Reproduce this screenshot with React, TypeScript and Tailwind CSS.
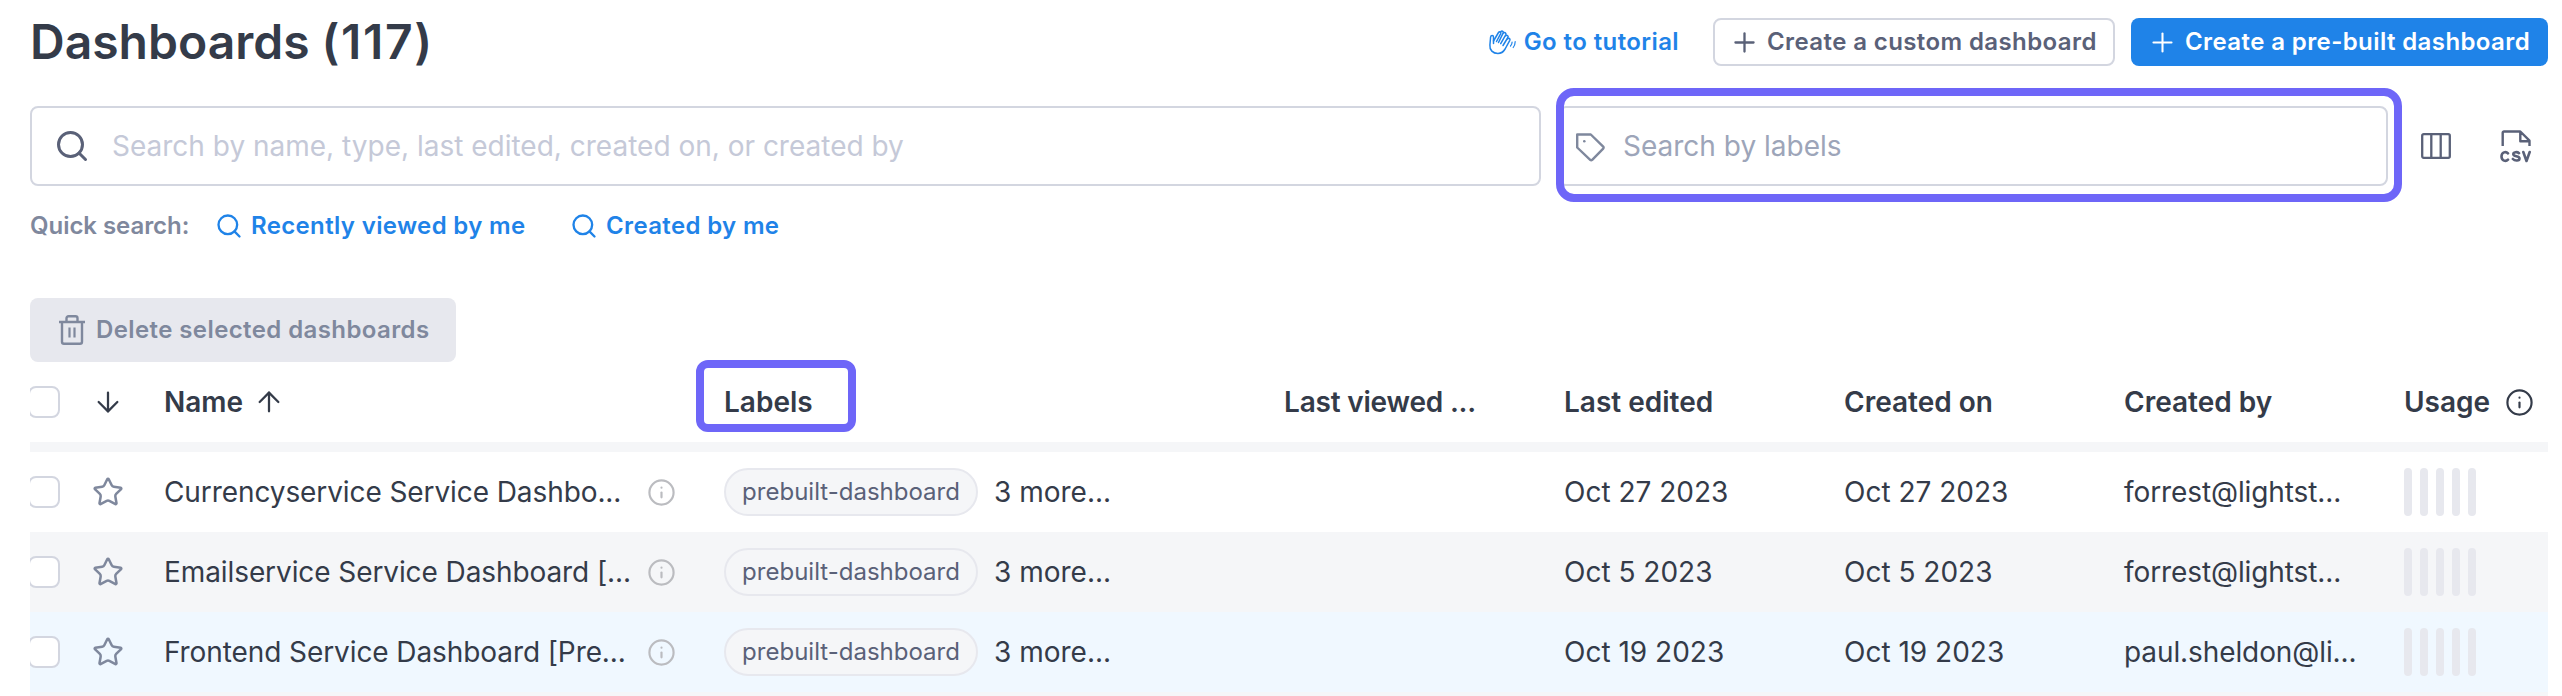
import { ArrowDown, ArrowUp, Info, Plus, Search, Star } from 'lucide-react'

type Row = {
  name: string
  edited: string
  created: string
  author: string
  className: string
}

const rows: Row[] = [
  {
    name: 'Currencyservice Service Dashbo...',
    edited: 'Oct 27 2023',
    created: 'Oct 27 2023',
    author: 'forrest@lightst...',
    className: 'bg-white',
  },
  {
    name: 'Emailservice Service Dashboard [...',
    edited: 'Oct 5 2023',
    created: 'Oct 5 2023',
    author: 'forrest@lightst...',
    className: 'bg-[#f5f6f8]',
  },
  {
    name: 'Frontend Service Dashboard [Pre...',
    edited: 'Oct 19 2023',
    created: 'Oct 19 2023',
    author: 'paul.sheldon@li...',
    className: 'bg-[#f0f8ff]',
  },
]

const columns = 'grid grid-cols-[134px_560px_560px_280px_280px_280px_280px_144px] items-center'

const WaveIcon = () => (
  <svg className="h-7 w-7" viewBox="0 0 28 28" fill="none" stroke="currentColor" strokeWidth="1.5" strokeLinecap="round" strokeLinejoin="round">
    <path d="M5.500 15.500V9c0-1.900-2.600-1.900-2.900 0L1.900 17c-.5 5 3 8.500 8 8.500 3.500 0 5.500-1.600 7.200-4.500l4.700-8.700c.8-1.600-1.200-2.800-2.300-1.300" />
    <path d="M5.500 13L10.500 4.500c1-1.600 3-.4 2.200 1.200L8.500 13.500M12.400 4.300c1.100-2.200 3.600-1.100 2.700.9L10.500 14.500M15 5.500c1.300-1.900 3.600-.6 2.700 1.300L12.700 15.700M17.500 8c1.400-1.500 3.300-.2 2.400 1.500L15 17.500" />
    <path d="M22.500 18c1-1 1.600-2.400 1.600-4M25.200 19.500c1.300-1.700 2-3.700 2-6" strokeWidth="1.200" />
  </svg>
)

const TagIcon = () => (
  <svg className="h-8 w-8 shrink-0 text-[#7f889d]" viewBox="0 0 32 32" fill="none" stroke="currentColor" strokeWidth="2.400" strokeLinejoin="round">
    <path d="M3.200 4.500h13.600L29.200 16.600a1.400 1.400 0 0 1 0 2L18.200 29.900a1.500 1.500 0 0 1-2 0L3.200 17.500z" />
    <circle cx="10.300" cy="11.300" r="1.300" fill="currentColor" stroke="none" />
  </svg>
)

const ColumnsIcon = () => (
  <svg className="h-[26px] w-[30px]" viewBox="0 0 30 26" fill="none" stroke="currentColor" strokeWidth="2.300">
    <rect x="1.200" y="1.200" width="27.600" height="23.600" rx="1.500" />
    <path d="M10.300 1v24M19.700 1v24" />
  </svg>
)

const CsvIcon = () => (
  <svg className="h-[33px] w-8" viewBox="0 0 32 33" fill="none" stroke="currentColor" strokeWidth="2.400" strokeLinejoin="round">
    <path d="M2.700 16V2.800a1.300 1.300 0 0 1 1.300-1.300H20.300l9.200 9.200V16M20.300 1.500v9.700h9.200" />
    <path
      d="M8 23.300c-2-2.200-6.500-1.300-6.500 3.200s4.500 5.400 6.500 3.200M19 23.200c-1.800-1.700-5.700-1.200-5.700 1 0 2.800 6.200 1.300 6.200 4.200 0 2.600-4.600 2.800-6.600.6M23.300 22l3.200 9 3.200-9"
      strokeWidth="2.600"
      strokeLinecap="round"
    />
  </svg>
)

const TrashIcon = () => (
  <svg className="h-[30px] w-[26px]" viewBox="0 0 26 30" fill="none" stroke="currentColor" strokeWidth="2.400" strokeLinejoin="round">
    <path d="M0 7h26M7.500 7V3.200a2 2 0 0 1 2-2h7a2 2 0 0 1 2 2V7M3 7v19.800a2 2 0 0 0 2 2h16a2 2 0 0 0 2-2V7" />
    <path d="M10.500 12.500v10M15.500 12.500v10" strokeWidth="2.200" />
  </svg>
)

// The box is pulled 2px left so the table edge clips its border.
const Checkbox = () => <span className="-ml-0.5 block size-8 shrink-0 rounded-lg border-2 border-[#d3d6e0] bg-white" />

const Header = () => (
  <header className="flex h-12 items-center justify-between">
    <h1 className="text-[48px] leading-12 font-semibold">
      Dashboards <span className="tracking-[1.6px]">(117)</span>
    </h1>
    <div className="flex items-center text-[24px] font-semibold tracking-[0.4px]">
      <a className="mr-[34px] flex items-center gap-2 text-[#1f83e8]">
        <WaveIcon />
        Go to tutorial
      </a>
      <button className="mr-4 flex h-12 w-[402px] items-center gap-[7px] rounded-lg border-2 border-[#d3d6e0] pl-[14px] text-[#5a6178]">
        <Plus size={31} strokeWidth={1.8} />
        Create a custom dashboard
      </button>
      <button className="flex h-12 w-[417px] items-center gap-[7px] rounded-lg bg-[#1f83e8] pl-4 text-white">
        <Plus size={31} strokeWidth={1.6} />
        Create a pre-built dashboard
      </button>
    </div>
  </header>
)

const SearchBar = () => (
  <div className="mt-10 flex h-20 items-center text-[28px]">
    <div className="flex h-20 w-[1511px] items-center gap-[22px] rounded-lg border-2 border-[#d3d6e0] pl-[22px] text-[#c5c9d8]">
      <Search size={36} strokeWidth={2} className="text-[#5a6178]" />
      Search by name, type, last edited, created on, or created by
    </div>
    <div className="relative ml-[17px] flex h-20 w-[830px] items-center gap-[17px] rounded-lg border-2 border-[#d3d6e0] pl-[14px] text-[#9da5b9]">
      <TagIcon />
      Search by labels
      <div className="absolute -top-5 -left-1 h-[114px] w-[846px] rounded-[18px] border-8 border-[#6e66f8]" />
    </div>
    <div className="ml-[33px] flex items-center gap-[49px] text-[#5a6178]">
      <ColumnsIcon />
      <CsvIcon />
    </div>
  </div>
)

const QuickSearch = () => (
  <div className="mt-6 flex h-8 items-center text-[24px] font-semibold text-[#7f889d]">
    <span className="w-[185px] tracking-[-0.05px]">Quick search:</span>
    <a className="flex w-[355px] items-center gap-2 tracking-[0.35px] text-[#1f83e8]">
      <Search size={28} strokeWidth={2} />
      Recently viewed by me
    </a>
    <a className="flex items-center gap-2 tracking-[0.35px] text-[#1f83e8]">
      <Search size={28} strokeWidth={2} />
      Created by me
    </a>
  </div>
)

const UsageBars = () => (
  <div className="flex gap-2">
    {[0, 1, 2, 3, 4].map((bar) => (
      <span key={bar} className="h-12 w-2 rounded-full bg-[#e7e8ee]" />
    ))}
  </div>
)

// The 8px of top padding keeps the Labels outline from being clipped.
const Table = () => (
  <div className="-mt-2 overflow-hidden pt-2 text-[28px]">
    <div className={`${columns} h-20 font-semibold`}>
      <div className="flex items-center gap-8">
        <Checkbox />
        <ArrowDown size={32} strokeWidth={1.7} />
      </div>
      <div className="flex items-center gap-[10px]">
        Name
        <ArrowUp size={32} strokeWidth={1.7} />
      </div>
      <div className="relative">
        Labels
        <div className="absolute -top-[21px] -left-7 h-[72px] w-40 rounded-xl border-8 border-[#6e66f8]" />
      </div>
      <div className="tracking-[-0.2px]">Last viewed ...</div>
      <div>Last edited</div>
      <div>Created on</div>
      <div>Created by</div>
      <div className="flex items-center gap-[15px]">
        Usage
        <Info size={29} strokeWidth={1.8} />
      </div>
    </div>
    <div className="h-[10px] bg-[#f5f6f8]" />
    {rows.map((row) => (
      <div key={row.name} className={`${columns} h-20 ${row.className}`}>
        <div className="flex items-center gap-8">
          <Checkbox />
          <Star size={32} strokeWidth={1.9} className="text-[#7f889d]" />
        </div>
        <div className="flex items-center justify-between pr-12 tracking-[-0.09px]">
          {row.name}
          <Info size={29} strokeWidth={1.8} className="text-[#bbbcc0]" />
        </div>
        <div className="flex items-center gap-4">
          <span className="flex h-12 w-[254px] items-center justify-center rounded-full border-2 border-[#e7e8ee] bg-[#f5f6f8] text-[24px] text-[#5a6178]">
            prebuilt-dashboard
          </span>
          3 more...
        </div>
        <div />
        <div>{row.edited}</div>
        <div>{row.created}</div>
        <div className="tracking-[-0.1px]">{row.author}</div>
        <UsageBars />
      </div>
    ))}
    <div className="h-1 bg-[#f5f6f8]" />
  </div>
)

export default function App() {
  return (
    <main className="h-[696px] w-[2562px] overflow-hidden bg-white pt-[18px] pr-[14px] pl-[30px] font-['Inter',sans-serif] whitespace-nowrap text-[#343b49]">
      <Header />
      <SearchBar />
      <QuickSearch />
      <button className="mt-14 flex h-16 w-[426px] items-center gap-[11px] rounded-lg bg-[#e7e8ee] pl-[29px] text-[24px] font-semibold tracking-[0.4px] text-[#7f889d]">
        <TrashIcon />
        Delete selected dashboards
      </button>
      <Table />
    </main>
  )
}
